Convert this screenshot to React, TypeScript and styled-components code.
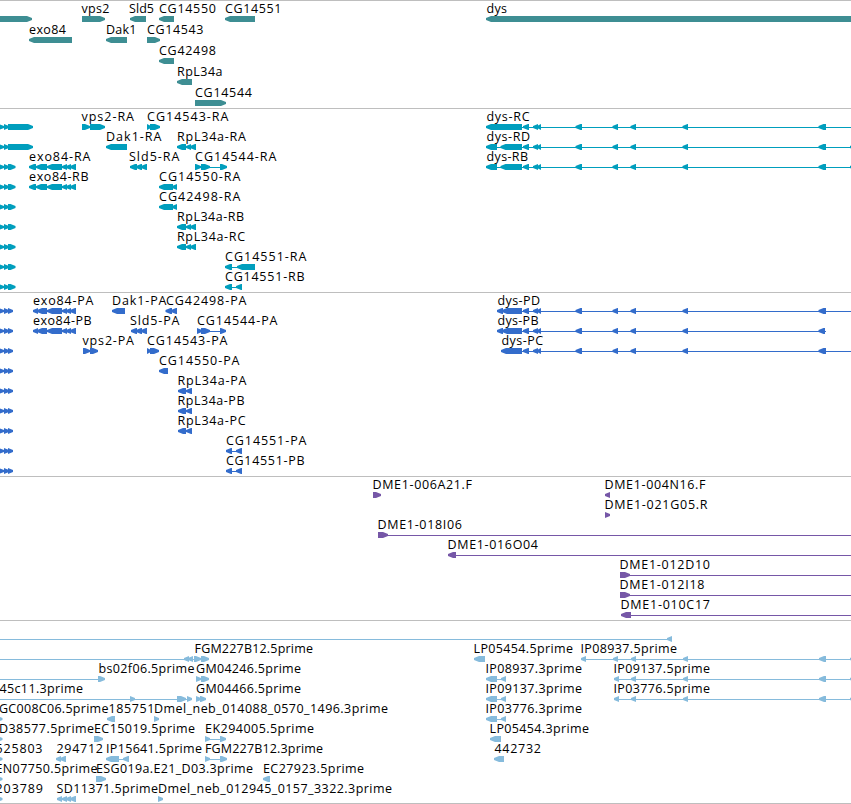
import styled, { createGlobalStyle } from "styled-components";

const GlobalStyle = createGlobalStyle`
	body {
		margin: 0;
		background: #ffffff;
		overflow: hidden;
	}
`;

const Browser = styled.main`
	display: flex;
	flex-direction: column;
	width: 851px;
	border-bottom: 1px solid #bebebe;
`;

const TrackPanel = styled.section<{ $color: string; $bottom: number }>`
	display: flex;
	flex-direction: column;
	padding: 1px 0 ${(p) => p.$bottom}px;
	border-top: 1px solid #bebebe;
	color: ${(p) => p.$color};
`;

const LaneCanvas = styled.svg<{ $height: number }>`
	display: block;
	width: 851px;
	height: ${(p) => p.$height}px;
	overflow: visible;
`;

const Label = styled.text`
	fill: #000000;
	font-family: "Open Sans", "DejaVu Sans", sans-serif;
	font-size: 12.5px;
	white-space: pre;
`;

const Exon = styled.polygon`
	fill: currentColor;
`;

const Intron = styled.rect`
	fill: currentColor;
	shape-rendering: crispEdges;
`;

type Span = [number, number];
type Dir = "l" | "r";

interface Feature {
	dir: Dir;
	exons: Span[];
	// name with the left and right edge of its text
	label?: [string, number, number];
	line?: Span;
}

interface Track {
	id: string;
	color: string;
	laneHeight: number;
	bottom: number;
	lanes: Feature[][];
}

const f = (
	dir: Dir,
	exons: Span[],
	label?: [string, number, number],
	line?: Span
): Feature => ({ dir, exons, label, line });

const EDGE = 851;

// exons shared by several isoforms
const dysTail: Span[] = [
	[523, 529],
	[533, 538],
	[537, 541],
	[575.5, 582],
	[612.5, 618],
	[630.5, 636],
	[682.5, 688],
	[818.5, 826],
];
const exo84: Span[] = [[29, 36], [36, 47], [47, 62], [62, 67], [66, 71], [70, 76]];
const exo84P: Span[] = [[33, 38], [37, 47], [47, 62], [62, 67], [66, 71], [70, 76]];
const sld5: Span[] = [[130, 137], [136, 142], [141, 147]];
const rpl34: Span[] = [[177, 186], [186, 191], [190, 196]];
const rpl34P: Span[] = [[178, 186], [186, 192]];
const farExons: Span[] = [[631, 636], [683, 688], [819, 826], [850, 856]];

const longEdge = () => f("r", [[-2, 4], [4, 9], [8, 33]], undefined, [0, 9]);
const shortEdge = () => f("r", [[-2, 4], [4, 9], [8, 15.5]], undefined, [0, 9]);
const proteinEdge = () => f("r", [[-2, 4], [4, 9], [8, 13]], undefined, [0, 9]);
const cutEdge = () => f("r", [[-4, 2.5]]);

const tracks: Track[] = [
	{
		id: "genes",
		color: "#3e8e93",
		laneHeight: 21,
		bottom: 1,
		lanes: [
			[
				f("r", [[-10, 32]]),
				f("r", [[82, 105]], ["vps2", 82, 109]),
				f("l", [[130, 146]], ["Sld5", 129.5, 153.5]),
				f("l", [[159, 174]], ["CG14550", 159.5, 215.5]),
				f("l", [[225, 255]], ["CG14551", 225.5, 281]),
				f("l", [[486, 900]], ["dys", 487, 506.5]),
			],
			[
				f("l", [[29, 72]], ["exo84", 29.5, 65.5]),
				f("l", [[106, 127]], ["Dak1", 106.5, 136]),
				f("r", [[147, 160]], ["CG14543", 147.5, 203]),
			],
			[f("l", [[159, 174]], ["CG42498", 159.5, 215.5])],
			[f("l", [[177, 192]], ["RpL34a", 177.5, 222])],
			[f("r", [[195, 226]], ["CG14544", 195.5, 251.5])],
		],
	},
	{
		id: "transcripts",
		color: "#009ebd",
		laneHeight: 20,
		bottom: 2,
		lanes: [
			[
				longEdge(),
				f("r", [[82, 90], [90, 105]], ["vps2-RA", 82, 133.5]),
				f("r", [[147, 151], [150, 160]], ["CG14543-RA", 147.5, 228]),
				f("l", [[486, 522], ...dysTail], ["dys-RC", 487, 529], [522, EDGE]),
			],
			[
				longEdge(),
				f("l", [[106, 127]], ["Dak1-RA", 106.5, 161]),
				f("l", rpl34, ["RpL34a-RA", 177.5, 245.5], [186, 192]),
				f("l", [[486, 497], [500.5, 522], ...dysTail, [850, 856]], ["dys-RD", 487, 529.5], [497, EDGE]),
			],
			[
				shortEdge(),
				f("l", exo84, ["exo84-RA", 29.5, 90], [30, 76]),
				f("l", sld5, ["Sld5-RA", 129.5, 179], [131, 146]),
				f("r", [[195, 201], [201, 210], [220, 227]], ["CG14544-RA", 195.5, 276], [196, 226]),
				f("l", [[486, 497], [500.5, 522], ...dysTail, [850, 856]], ["dys-RB", 487, 527.5], [497, EDGE]),
			],
			[
				shortEdge(),
				f("l", exo84, ["exo84-RB", 29.5, 88], [30, 76]),
				f("l", [[159, 173], [172, 177]], ["CG14550-RA", 159.5, 240]),
			],
			[shortEdge(), f("l", [[159, 173], [172, 177]], ["CG42498-RA", 159.5, 240])],
			[shortEdge(), f("l", rpl34, ["RpL34a-RB", 177.5, 243.5], [186, 192])],
			[shortEdge(), f("l", rpl34, ["RpL34a-RC", 177.5, 244.5], [186, 192])],
			[
				shortEdge(),
				f("l", [[225, 232], [237, 255]], ["CG14551-RA", 225.5, 306], [230, 240]),
			],
			[
				shortEdge(),
				f("l", [[225, 232], [236, 242]], ["CG14551-RB", 225.5, 304], [230, 240]),
			],
		],
	},
	{
		id: "proteins",
		color: "#336ccb",
		laneHeight: 20,
		bottom: 2,
		lanes: [
			[
				proteinEdge(),
				f("l", exo84P, ["exo84-PA", 33.5, 93], [34, 76]),
				f("l", [[112, 125]], ["Dak1-PA", 112.5, 166]),
				f("l", [[165.5, 172], [171, 177]], ["CG42498-PA", 166.5, 246]),
				f("l", [[497, 503], [502, 522], ...dysTail], ["dys-PD", 498, 539.5], [500, EDGE]),
			],
			[
				proteinEdge(),
				f("l", exo84P, ["exo84-PB", 33.5, 91], [34, 76]),
				f("l", [[131, 137], [136, 142], [141, 147]], ["Sld5-PA", 130.5, 179]),
				f("r", [[197, 202], [201, 210], [220, 226]], ["CG14544-PA", 197.5, 277], [198, 226]),
				f("l", [[497, 503], [502, 522], ...dysTail.slice(0, -1), [818.5, 825]], ["dys-PB", 498, 538], [500, 826]),
			],
			[
				proteinEdge(),
				f("r", [[83, 90], [90, 98]], ["vps2-PA", 83, 133.5]),
				f("r", [[147, 151], [150, 159]], ["CG14543-PA", 147.5, 227]),
				f("l", [[501, 522], ...dysTail], ["dys-PC", 502, 542.5], [522, EDGE]),
			],
			[proteinEdge(), f("l", [[159, 168]], ["CG14550-PA", 159.5, 239])],
			[proteinEdge(), f("l", rpl34P, ["RpL34a-PA", 178, 246])],
			[proteinEdge(), f("l", rpl34P, ["RpL34a-PB", 178, 244])],
			[proteinEdge(), f("l", rpl34P, ["RpL34a-PC", 178, 245])],
			[
				proteinEdge(),
				f("l", [[226, 232], [236, 242]], ["CG14551-PA", 226.5, 306], [230, 240]),
			],
			[
				proteinEdge(),
				f("l", [[226, 232], [236, 242]], ["CG14551-PB", 226.5, 304], [230, 240]),
			],
		],
	},
	{
		id: "clones",
		color: "#7657a7",
		laneHeight: 20,
		bottom: 2,
		lanes: [
			[
				f("r", [[373, 381]], ["DME1-006A21.F", 373, 471.5]),
				f("l", [[605, 610]], ["DME1-004N16.F", 605, 705]),
			],
			[f("r", [[605, 610]], ["DME1-021G05.R", 605, 707])],
			[f("r", [[378, 388]], ["DME1-018I06", 378, 461.5], [386, EDGE])],
			[f("l", [[448, 456]], ["DME1-016O04", 448, 537.5], [456, EDGE])],
			[f("r", [[620, 630]], ["DME1-012D10", 620, 709.5], [628, EDGE])],
			[f("r", [[620, 630]], ["DME1-012I18", 620, 704], [628, EDGE])],
			[f("l", [[621, 631]], ["DME1-010C17", 621, 709.5], [631, EDGE])],
		],
	},
	{
		id: "ests",
		color: "#86bbdc",
		laneHeight: 20,
		bottom: 1,
		lanes: [
			[f("l", [[667, 672]], undefined, [0, 668])],
			[
				f("l", [[184, 189], [188, 193]], undefined, [0, 186]),
				f("r", [[194, 201], [201, 209]], ["FGM227B12.5prime", 195, 312.5], [192, 203]),
				f("l", [[474, 485]], ["LP05454.5prime", 474, 572.5]),
				f("l", [[581, 586], [613, 618], ...farExons], ["IP08937.5prime", 581, 676.5], [585, EDGE]),
			],
			[
				f("r", [[98, 105]], ["bs02f06.5prime", 99, 194], [0, 100]),
				f("r", [[196, 201], [201, 209]], ["GM04246.5prime", 196.5, 300.5]),
				f("l", [[486, 497], [501, 506]], ["IP08937.3prime", 486, 581.5], [497, 503]),
				f("l", [[614, 619], ...farExons], ["IP09137.5prime", 614, 709.5], [617, EDGE]),
			],
			[
				f("r", [[130, 135], [177, 186], [187, 192]], ["45c11.3prime", 0, 82.5], [0, 188]),
				f("r", [[196, 201], [200, 206]], ["GM04466.5prime", 196.5, 300.5]),
				f("l", [[486, 497], [501, 506]], ["IP09137.3prime", 486, 581.5], [497, 503]),
				f("l", [[614, 619], ...farExons], ["IP03776.5prime", 614, 709.5], [617, EDGE]),
			],
			[
				{ ...cutEdge(), label: ["GC008C06.5prime", -0.5, 108] },
				f("l", [[107, 115]], ["185751", 109, 154]),
				f("r", [[154, 159]], ["Dmel_neb_014088_0570_1496.3prime", 154.5, 387.5]),
				f("l", [[486, 497], [501, 506]], ["IP03776.3prime", 486, 581.5], [497, 503]),
			],
			[
				{ ...cutEdge(), label: ["D38577.5prime", -0.5, 93.5] },
				f("r", [[94, 103]], ["EC15019.5prime", 94.5, 194.5]),
				f("r", [[205, 210], [220, 226]], ["EK294005.5prime", 205.5, 313.5], [208, 222]),
				f("l", [[490, 501]], ["LP05454.3prime", 490, 588.5]),
			],
			[
				{ ...cutEdge(), label: ["525803", -4, 42] },
				f("l", [[56, 61], [60, 66]], ["294712", 57, 102.5]),
				f("l", [[106, 119], [123, 129]], ["IP15641.5prime", 106.5, 201.5], [118, 126]),
				f("r", [[205, 210], [220, 227]], ["FGM227B12.3prime", 205.5, 322.5], [208, 222]),
				f("l", [[494, 504]], ["442732", 495, 540.5]),
			],
			[
				{ ...cutEdge(), label: ["EN07750.5prime", -4, 97] },
				f("r", [[96, 106]], ["ESG019a.E21_D03.3prime", 96.5, 252.5]),
				f("l", [[263, 270]], ["EC27923.5prime", 263.5, 363.5]),
			],
			[
				{ ...cutEdge(), label: ["203789", -4, 42.5] },
				f("l", [[57, 62], [62, 67], [66, 71], [70, 76]], ["SD11371.5prime", 57, 157.5], [58, 74]),
				f("r", [[158, 163]], ["Dmel_neb_012945_0157_3322.3prime", 158.5, 391.5]),
			],
		],
	},
];

// Box with an arrow head, 6px high, pointing along the strand
function exonPoints([start, end]: Span, dir: Dir) {
	const head = Math.min(5, end - start);
	const tip = dir === "l" ? start : end;
	const tail = dir === "l" ? end : start;
	const neck = dir === "l" ? start + head : end - head;
	return `${tip},16 ${tip},18 ${neck},20 ${tail},20 ${tail},14 ${neck},14`;
}

function FeatureGlyph({ feature }: { feature: Feature }) {
	const { dir, exons, label, line } = feature;
	return (
		<g>
			{line && <Intron x={line[0]} y={17} width={line[1] - line[0]} height={1} />}
			{exons.map((exon) => (
				<Exon key={exon[0]} points={exonPoints(exon, dir)} />
			))}
			{label && (
				<Label x={label[1] - 0.5} y={11} textLength={label[2] - label[1] + 1}>
					{label[0]}
				</Label>
			)}
		</g>
	);
}

export default function App() {
	return (
		<>
			<GlobalStyle />
			<Browser>
				{tracks.map((track) => (
					<TrackPanel key={track.id} $color={track.color} $bottom={track.bottom}>
						{track.lanes.map((lane, i) => (
							<LaneCanvas key={i} $height={track.laneHeight}>
								{lane.map((feature, j) => (
									<FeatureGlyph key={j} feature={feature} />
								))}
							</LaneCanvas>
						))}
					</TrackPanel>
				))}
			</Browser>
		</>
	);
}
